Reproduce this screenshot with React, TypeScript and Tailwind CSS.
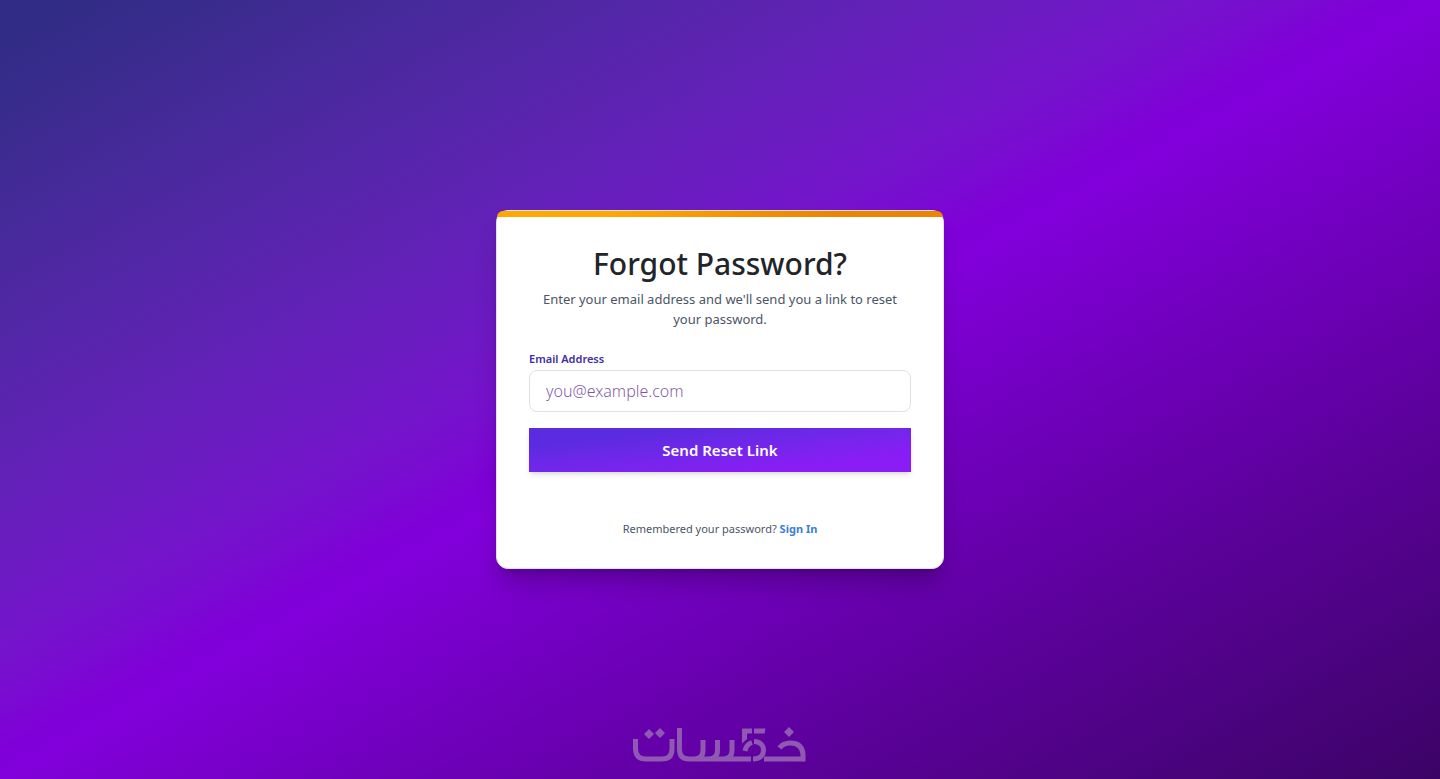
import React from 'react';

const KhamsatLogo = () => (
  <svg width="174" height="36" viewBox="0 0 174 36" fill="none" stroke="currentColor" strokeWidth="5" aria-label="خمسات" role="img">
    <path d="M2.500 12v9.500q0 10.500 10.500 10.500h16q10 0 10-10V12M46.500 1v21.500q0 9.500 9.500 9.500h62M70 13v10q0 9-9 9M84.500 13v10q0 9-9 9M99 13v10q0 9-9 9" />
    <path d="M109 1.500h10v5h-5v5.500l-5 4.500zM121 1.500h11.500l-1 5H121z" fill="currentColor" stroke="none" />
    <path d="M112 24q1-6.500 7-8.500M121 14.500c6 0 9.500 4 9.500 8.500c0 5-3.500 9-10.500 9" />
    <path d="M131 32h39V27q-1-11-13-11q-7 0-10.500 5" />
    <path d="M16 2l5 5-5 5-5-5zM27 1l5 5-5 5-5-5zM156 0l5 5-5 5-5-5z" fill="currentColor" stroke="none" />
  </svg>
);

const App = () => {
  return (
    <div className="relative flex min-h-screen items-center justify-center bg-linear-to-br from-indigo-900 from-3% via-purple-700 to-purple-950 p-4 font-['Noto_Sans','Open_Sans',sans-serif]">
      <main className="w-full max-w-md rounded-xl border border-[#dee2e6] bg-white shadow-xl shadow-black/20">
        <div className="h-1.5 rounded-t-xl bg-linear-to-r from-[#ffa800] from-25% to-[#ec8400] to-75%" />
        <div className="px-8 pt-7 pb-[30px]">
          <h1 className="text-center text-[30px] leading-[38px] font-medium text-[#212529]">Forgot Password?</h1>
          <p className="mt-1.5 text-center text-[13px] leading-5 text-[#4a5565]">
            Enter your email address and we'll send you a link to reset your password.
          </p>

          <form className="mt-5" onSubmit={(e) => e.preventDefault()}>
            <label htmlFor="email" className="block text-[11px] leading-5 font-semibold text-[#432dA8]">
              Email Address
            </label>
            <input
              id="email"
              type="email"
              placeholder="you@example.com"
              className="mt-px h-[42px] w-full rounded-lg border border-[#dee2e6] bg-white px-4 text-base font-light text-[#59168b] outline-none placeholder:text-[#59168b]/75"
            />
            <button
              type="submit"
              className="mt-4 h-11 w-full bg-linear-to-br from-[#5a2be0] from-20% to-[#8a1cf5] to-80% text-[15px] font-semibold text-white shadow-md"
            >
              Send Reset Link
            </button>
          </form>

          <p className="mt-12 text-center text-[11px] leading-[18px] text-[#4a5565]">
            Remembered your password?{' '}
            <a href="#signin" className="font-bold text-[#3b7dd8]">
              Sign In
            </a>
          </p>
        </div>
      </main>

      <div className="absolute bottom-4 left-1/2 -translate-x-1/2 text-[#8f58b2]">
        <KhamsatLogo />
      </div>
    </div>
  );
};

export default App;
